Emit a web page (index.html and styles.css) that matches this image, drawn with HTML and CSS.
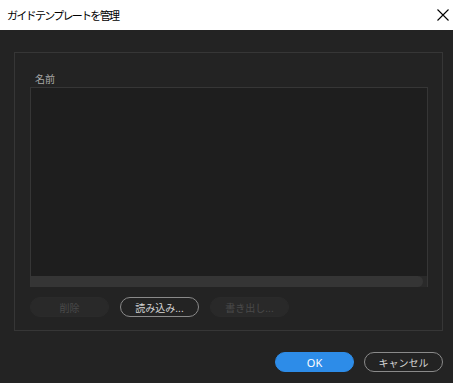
FILE: index.html
```html
<!DOCTYPE html>
<html>
<head>
	<meta charset="utf-8">
	<link rel="stylesheet" href="styles.css">
</head>
<body>
	<div class="titlebar">
		<span class="title">ガイドテンプレートを管理</span>
		<svg class="close" width="12" height="12" viewBox="0 0 12 12">
			<path d="M0.5 0.5 L11.5 11.5 M11.5 0.5 L0.5 11.5" stroke="#000" stroke-width="1.1" fill="none"/>
		</svg>
	</div>
	<div class="content">
		<div class="panel">
			<div class="label">名前</div>
			<div class="list">
				<div class="list-body"></div>
				<div class="scroll"><div class="thumb"></div></div>
			</div>
			<div class="buttons">
				<button class="btn disabled">削除</button>
				<button class="btn">読み込み...</button>
				<button class="btn disabled">書き出し...</button>
			</div>
		</div>
		<div class="footer">
			<button class="btn primary">OK</button>
			<button class="btn">キャンセル</button>
		</div>
	</div>
</body>
</html>
```
FILE: styles.css
```css
	body {
		margin: 0;
		width: 453px;
		height: 383px;
		background: #232323;
		font-family: "Noto Sans CJK JP", "Noto Sans", sans-serif;
		overflow: hidden;
	}

	.titlebar {
		height: 30px;
		background: #ffffff;
		display: flex;
		align-items: center;
		justify-content: space-between;
		padding: 0 4px 0 7px;
	}

	.title {
		font-size: 11px;
		letter-spacing: -1.7px;
		color: #000;
	}

	.content {
		padding: 22px 10px 0 14px;
	}

	.panel {
		border: 1px solid #363636;
		padding: 0 14px 0 15px;
		box-sizing: border-box;
		height: 279px;
	}

	.label {
		font-size: 10px;
		color: #a8a8a8;
		padding: 17px 0 0 5px;
		height: 17px;
		line-height: 17px;
	}

	.list {
		height: 200px;
		border: 1px solid #363636;
		border-bottom: none;
		background: #1e1e1e;
		display: flex;
		flex-direction: column;
		box-sizing: border-box;
	}

	.list-body {
		flex: 1;
	}

	.scroll {
		height: 11px;
		background: #2a2a2a;
		padding-right: 4px;
	}

	.thumb {
		height: 100%;
		background: #353535;
		border-radius: 0 6px 6px 0;
	}

	.buttons {
		display: flex;
		gap: 11px;
		margin-top: 10px;
	}

	.btn {
		width: 79px;
		height: 20px;
		border-radius: 10px;
		border: 1px solid #8a8a8a;
		background: #232323;
		color: #d6d6d6;
		font-family: "Noto Sans CJK JP", "Noto Sans", sans-serif;
		font-size: 10px;
		padding: 0;
		line-height: 17px;
	}

	.btn.disabled {
		border-color: #2a2a2a;
		background: #292929;
		color: #4a4a4a;
	}

	.footer {
		display: flex;
		justify-content: flex-end;
		gap: 10px;
		margin-top: 21px;
	}

	.btn.primary {
		background: #2d8ce8;
		border-color: #2d8ce8;
		color: #ffffff;
		font-family: "Noto Sans", sans-serif;
		font-size: 11px;
	}
```
